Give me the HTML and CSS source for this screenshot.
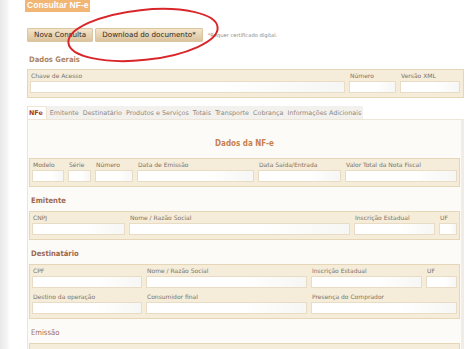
FILE: index.html
```html
<!DOCTYPE html>
<html lang="pt-BR">
<head>
    <meta charset="UTF-8">
    <meta name="viewport" content="width=device-width, initial-scale=1.0">
    <title>Consultar NF-e</title>
    <link rel="stylesheet" href="styles.css">
</head>
<body>

<div class="page">
    <div class="title">Consultar NF-e</div>

    <div class="actions">
        <button class="btn">Nova Consulta</button>
        <button class="btn">Download do documento*</button>
        <span class="note">*Requer certificado digital.</span>
    </div>

    <h4 class="section-title">Dados Gerais</h4>
    <div class="panel cols-geral">
        <div class="field"><span class="label">Chave de Acesso</span><div class="box"></div></div>
        <div class="field"><span class="label">Número</span><div class="box"></div></div>
        <div class="field"><span class="label">Versão XML</span><div class="box"></div></div>
    </div>

    <div class="tabs">
        <span class="tab active">NFe</span>
        <span class="tab">Emitente</span>
        <span class="tab">Destinatário</span>
        <span class="tab">Produtos e Serviços</span>
        <span class="tab">Totais</span>
        <span class="tab">Transporte</span>
        <span class="tab">Cobrança</span>
        <span class="tab">Informações Adicionais</span>
    </div>

    <div class="tab-content">
        <h3 class="content-title">Dados da NF-e</h3>
        <div class="panel inner cols-nfe">
            <div class="field"><span class="label">Modelo</span><div class="box"></div></div>
            <div class="field"><span class="label">Série</span><div class="box"></div></div>
            <div class="field"><span class="label">Número</span><div class="box"></div></div>
            <div class="field"><span class="label">Data de Emissão</span><div class="box"></div></div>
            <div class="field"><span class="label">Data Saída/Entrada</span><div class="box"></div></div>
            <div class="field"><span class="label">Valor Total da Nota Fiscal</span><div class="box"></div></div>
        </div>

        <h4 class="section-title">Emitente</h4>
        <div class="panel inner cols-emit">
            <div class="field"><span class="label">CNPJ</span><div class="box"></div></div>
            <div class="field"><span class="label">Nome / Razão Social</span><div class="box"></div></div>
            <div class="field"><span class="label">Inscrição Estadual</span><div class="box"></div></div>
            <div class="field"><span class="label">UF</span><div class="box"></div></div>
        </div>

        <h4 class="section-title">Destinatário</h4>
        <div class="panel inner cols-dest">
            <div class="field"><span class="label">CPF</span><div class="box"></div></div>
            <div class="field"><span class="label">Nome / Razão Social</span><div class="box"></div></div>
            <div class="field"><span class="label">Inscrição Estadual</span><div class="box"></div></div>
            <div class="field"><span class="label">UF</span><div class="box"></div></div>
            <div class="field"><span class="label">Destino da operação</span><div class="box"></div></div>
            <div class="field"><span class="label">Consumidor final</span><div class="box"></div></div>
            <div class="field wide"><span class="label">Presença do Comprador</span><div class="box"></div></div>
        </div>

        <h4 class="section-title light">Emissão</h4>
        <div class="panel inner cols-emit"></div>
    </div>
</div>

<!-- marcação feita à mão sobre o print -->
<svg class="mark" width="474" height="80" viewBox="0 0 474 80">
    <ellipse cx="143" cy="35" rx="75" ry="25" transform="rotate(-6 143 35)" fill="none" stroke="#d8262a" stroke-width="2"/>
</svg>

</body>
</html>
```

FILE: styles.css
```css
body {
    margin: 0;
    font-family: "DejaVu Sans", Verdana, sans-serif;
    background: linear-gradient(to right, #e9e9e9, #f4f4f4 7px, #ffffff 10px);
    overflow: hidden;
}
.page {
    width: 437px;
    margin-left: 27px;
}
.title {
    width: 63px;
    height: 12px;
    margin-left: -2px;
    padding-left: 2px;
    line-height: 11px;
    background-color: #f1b574;
    color: #ffffff;
    font-family: "Liberation Sans", Arial, sans-serif;
    font-weight: bold;
    font-size: 8.6px;
    white-space: nowrap;
}
.actions {
    display: flex;
    align-items: center;
    gap: 2px;
    margin-top: 16px;
}
.btn {
    height: 14px;
    padding: 0 6px;
    border: 1px solid #dbc6a2;
    border-radius: 1px;
    background: linear-gradient(#f3e4cb, #dcc29c);
    color: #2e2a24;
    font-family: "DejaVu Sans", Verdana, sans-serif;
    font-size: 7.2px;
    line-height: 12px;
    cursor: pointer;
}
.note {
    margin-left: 3px;
    color: #8c8c8c;
    font-size: 5.2px;
}
.section-title {
    margin: 12px 0 3px 2px;
    line-height: 12px;
    font-family: "DejaVu Sans Condensed", "DejaVu Sans", sans-serif;
    font-size: 7.6px;
    font-weight: bold;
    color: #ad8464;
}
.tab-content .section-title {
    margin: 8px 0 4px 2px;
    color: #9c6a50;
}
.section-title.light {
    font-weight: normal;
    color: #a06a52;
}
.panel {
    display: grid;
    column-gap: 4px;
    row-gap: 4px;
    padding: 1px 3px 4px 2px;
    background-color: #f5ecd9;
    border: 1px solid #e5d6b8;
}
.panel.inner {
    padding: 1px 2px 4px 2px;
}
.cols-geral { grid-template-columns: 315px 47px 1fr; }
.cols-nfe { grid-template-columns: 32px 23px 38px 117px 83px 1fr; }
.cols-emit { grid-template-columns: 93px 221px 81px 1fr; min-height: 20px; }
.cols-dest { grid-template-columns: 110px 161px 111px 1fr; }
.field.wide { grid-column: span 2; }
.label {
    display: block;
    height: 10px;
    line-height: 10px;
    padding-left: 1px;
    font-size: 6px;
    color: #7a7468;
    white-space: nowrap;
}
.box {
    height: 10px;
    background: linear-gradient(to right, #ffffff 60%, #f6f6f4);
    border: 1px solid #e8dcc4;
}
.tabs {
    display: flex;
    gap: 2px;
    width: 336px;
    height: 13px;
    margin-top: 8px;
    background-color: #f3f1ed;
}
.tab {
    padding: 0 1px;
    line-height: 14px;
    font-size: 6.4px;
    color: #8d8983;
    white-space: nowrap;
}
.tab.active {
    padding: 0 3px 0 1px;
    background-color: #ffffff;
    border: 1px solid #efe5d6;
    border-bottom: none;
    line-height: 12px;
    font-weight: bold;
    color: #a8381e;
}
.tab-content {
    height: 240px;
    padding: 18px 1px 0 1px;
    background-color: #fcfbf8;
    border: 1px solid #ede5d8;
    border-right: 3px solid #f1ede6;
}
.content-title {
    margin: 0 0 8px 0;
    line-height: 12px;
    text-align: center;
    font-family: "DejaVu Sans Condensed", "DejaVu Sans", sans-serif;
    font-size: 8px;
    font-weight: bold;
    color: #c8804e;
}
.mark {
    position: absolute;
    left: 0;
    top: 0;
    pointer-events: none;
}
```
